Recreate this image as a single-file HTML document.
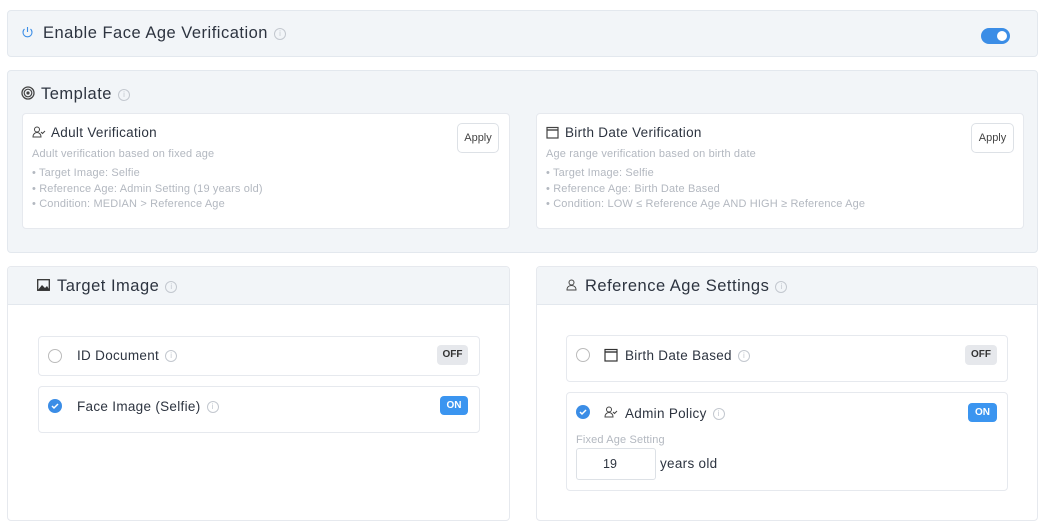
<!DOCTYPE html>
<html><head><meta charset="utf-8"><style>
*{box-sizing:border-box;margin:0;padding:0}
body{width:1045px;height:525px;background:#fff;font-family:"Liberation Sans",sans-serif;color:#2d3440;position:relative;overflow:hidden}
.a{position:absolute}
.panel{background:#f2f5f8;border:1px solid #e3e8ee;border-radius:4px}
.card{background:#fff;border:1px solid #e6e9ee;border-radius:4px}
.info{display:inline-block;width:12px;height:12px;border:1px solid #c3c8cf;border-radius:50%;vertical-align:middle;font-size:8px;color:#c3c8cf;text-align:center;line-height:10px;margin-left:6px;letter-spacing:0}
.t1{font-size:16.5px;letter-spacing:0.5px}
.t2{font-size:13.5px;letter-spacing:0.3px}
.g{color:#b3b8c0;font-size:11px;letter-spacing:0.15px}
.btn{border:1px solid #dde1e6;border-radius:5px;background:#fff;font-size:11px;color:#444;text-align:center;line-height:28px}
.off{background:#e6e8ec;color:#333;font-size:10px;font-weight:bold;border-radius:4px;text-align:center;line-height:20px}
.on{background:#3b95f0;color:#fff;font-size:10px;font-weight:bold;border-radius:4px;text-align:center;line-height:19px}
.rad{width:14px;height:14px;border:1px solid #bbb;border-radius:50%;background:#fff}
.chk{width:14px;height:14px;border-radius:50%;background:#3b8de6}
</style></head><body>
<div class="a panel" style="left:7px;top:10px;width:1031px;height:47px"></div>
<svg class="a" style="left:21px;top:26px" width="13" height="13" viewBox="0 0 13 13"><path d="M6.5 1v5M3.5 3a4.5 4.5 0 1 0 6 0" fill="none" stroke="#3b8de6" stroke-width="1.1"/></svg>
<div class="a t1" style="left:43px;top:24px">Enable Face Age Verification<span class="info">i</span></div>
<div class="a" style="left:981px;top:28px;width:29px;height:16px;border-radius:8px;background:#3b8de6"><div style="position:absolute;right:3px;top:3px;width:10px;height:10px;border-radius:50%;background:#fff"></div></div>

<div class="a panel" style="left:7px;top:70px;width:1031px;height:183px"></div>
<svg class="a" style="left:21px;top:86px" width="14" height="14" viewBox="0 0 14 14"><circle cx="7" cy="7" r="6" fill="none" stroke="#444" stroke-width="1.3"/><circle cx="7" cy="7" r="3.8" fill="none" stroke="#444" stroke-width="1.2"/><circle cx="7" cy="7" r="1.6" fill="#444"/></svg>
<div class="a t1" style="left:41px;top:85px">Template<span class="info">i</span></div>

<div class="a card" style="left:22px;top:113px;width:488px;height:116px"></div>
<svg class="a" style="left:32px;top:126px" width="14" height="12" viewBox="0 0 14 12"><circle cx="5" cy="3.5" r="2.5" fill="none" stroke="#444"/><path d="M1 11c0-3 2-4.5 4-4.5s4 1.5 4 4.5zM9 6l1.5 1.5L13 5" fill="none" stroke="#444"/></svg>
<div class="a t2" style="left:51px;top:125px">Adult Verification</div>
<div class="a g" style="left:32px;top:148px">Adult verification based on fixed age</div>
<div class="a g" style="left:32px;top:166px;line-height:15.5px">• Target Image: Selfie<br>• Reference Age: Admin Setting (19 years old)<br>• Condition: MEDIAN &gt; Reference Age</div>
<div class="a btn" style="left:457px;top:123px;width:42px;height:30px">Apply</div>

<div class="a card" style="left:536px;top:113px;width:488px;height:116px"></div>
<svg class="a" style="left:546px;top:126px" width="13" height="13" viewBox="0 0 13 13"><rect x="1" y="1.5" width="11" height="10.5" fill="none" stroke="#444" stroke-width="1.2"/><path d="M1 4h11" stroke="#444" stroke-width="1.4"/></svg>
<div class="a t2" style="left:565px;top:125px">Birth Date Verification</div>
<div class="a g" style="left:546px;top:148px">Age range verification based on birth date</div>
<div class="a g" style="left:546px;top:166px;line-height:15.5px">• Target Image: Selfie<br>• Reference Age: Birth Date Based<br>• Condition: LOW ≤ Reference Age AND HIGH ≥ Reference Age</div>
<div class="a btn" style="left:971px;top:123px;width:43px;height:30px">Apply</div>

<!-- Target Image -->
<div class="a card" style="left:7px;top:266px;width:503px;height:255px;overflow:hidden"><div style="height:38px;background:#f2f5f8;border-bottom:1px solid #e3e8ee"></div></div>
<svg class="a" style="left:37px;top:279px" width="13" height="12" viewBox="0 0 13 12"><rect x="0.7" y="0.7" width="11.6" height="10.6" fill="none" stroke="#333" stroke-width="1.3"/><path d="M1 11l4-5 3 3 2-2 2.5 4z" fill="#333"/></svg>
<div class="a t1" style="left:57px;top:277px">Target Image<span class="info">i</span></div>
<div class="a card" style="left:38px;top:336px;width:442px;height:40px"></div>
<div class="a rad" style="left:48px;top:349px"></div>
<div class="a t2" style="left:77px;top:348px">ID Document<span class="info">i</span></div>
<div class="a off" style="left:437px;top:345px;width:31px">OFF</div>
<div class="a card" style="left:38px;top:386px;width:442px;height:47px"></div>
<div class="a chk" style="left:48px;top:399px"><svg width="14" height="14"><path d="M4 7l2 2 4-4" fill="none" stroke="#fff" stroke-width="1.5"/></svg></div>
<div class="a t2" style="left:77px;top:399px">Face Image (Selfie)<span class="info">i</span></div>
<div class="a on" style="left:440px;top:396px;width:28px">ON</div>

<!-- Reference Age -->
<div class="a card" style="left:536px;top:266px;width:502px;height:255px;overflow:hidden"><div style="height:38px;background:#f2f5f8;border-bottom:1px solid #e3e8ee"></div></div>
<svg class="a" style="left:566px;top:279px" width="11" height="12" viewBox="0 0 11 12"><circle cx="5.5" cy="3.5" r="2.5" fill="none" stroke="#444"/><path d="M1 11c0-3 2-4.5 4.5-4.5S10 8 10 11z" fill="none" stroke="#444"/></svg>
<div class="a t1" style="left:585px;top:277px">Reference Age Settings<span class="info">i</span></div>
<div class="a card" style="left:566px;top:335px;width:442px;height:47px"></div>
<div class="a rad" style="left:576px;top:348px"></div>
<svg class="a" style="left:604px;top:348px" width="14" height="14" viewBox="0 0 14 14"><rect x="1" y="1.5" width="12" height="11.5" fill="none" stroke="#333" stroke-width="1.2"/><path d="M1 4h12" stroke="#333" stroke-width="1.4"/></svg>
<div class="a t2" style="left:625px;top:348px">Birth Date Based<span class="info">i</span></div>
<div class="a off" style="left:965px;top:345px;width:32px">OFF</div>
<div class="a card" style="left:566px;top:392px;width:442px;height:99px"></div>
<div class="a chk" style="left:576px;top:405px"><svg width="14" height="14"><path d="M4 7l2 2 4-4" fill="none" stroke="#fff" stroke-width="1.5"/></svg></div>
<svg class="a" style="left:604px;top:406px" width="14" height="12" viewBox="0 0 14 12"><circle cx="5" cy="3.5" r="2.5" fill="none" stroke="#444"/><path d="M1 11c0-3 2-4.5 4-4.5s4 1.5 4 4.5zM9 6l1.5 1.5L13 5" fill="none" stroke="#444"/></svg>
<div class="a t2" style="left:625px;top:406px">Admin Policy<span class="info">i</span></div>
<div class="a on" style="left:968px;top:403px;width:29px">ON</div>
<div class="a g" style="left:576px;top:434px">Fixed Age Setting</div>
<div class="a" style="left:576px;top:448px;width:80px;height:32px;border:1px solid #dde1e6;border-radius:3px;font-size:12.5px;line-height:30px;padding-left:26px">19</div>
<div class="a t2" style="left:660px;top:456px">years old</div>
</body></html>
